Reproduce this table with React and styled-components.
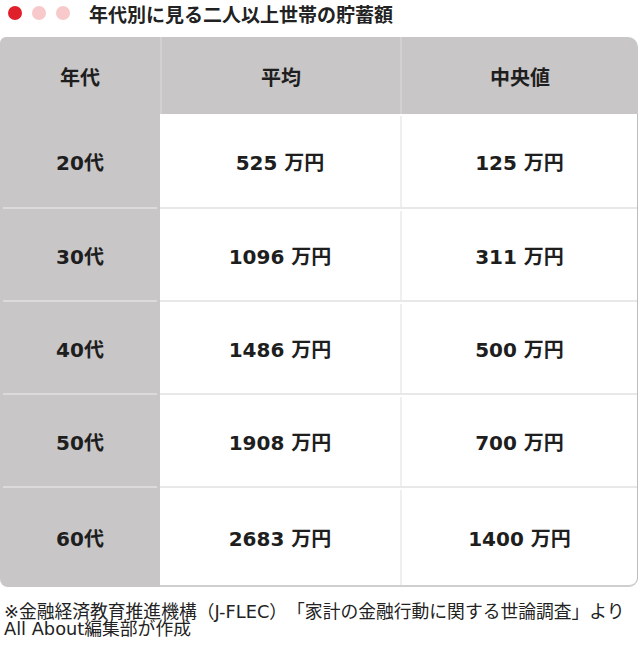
import styled, { createGlobalStyle } from "styled-components";

const rows = [
  { age: "20代", avg: "525", mid: "125" },
  { age: "30代", avg: "1096", mid: "311" },
  { age: "40代", avg: "1486", mid: "500" },
  { age: "50代", avg: "1908", mid: "700" },
  { age: "60代", avg: "2683", mid: "1400" },
];

const GlobalStyle = createGlobalStyle`
  body {
    margin: 0;
    background: #fff;
    font-family: "DejaVu Sans", "Noto Sans CJK JP", sans-serif;
    color: #1e1e1e;
  }
`;

const Page = styled.div`
  width: 640px;
  height: 660px;
  overflow: hidden;
`;

const TitleBar = styled.div`
  display: flex;
  align-items: center;
  height: 26px;
  padding-left: 8px;
  gap: 10px;
`;

const Dot = styled.span`
  width: 14px;
  height: 14px;
  border-radius: 50%;
  background: ${p => p.color};
`;

const Title = styled.h1`
  margin: 0 0 0 9px;
  font-size: 19px;
  font-weight: 700;
  color: #222;
`;

const Table = styled.div`
  margin-top: 11px;
  width: 638px;
`;

const HeaderRow = styled.div`
  display: grid;
  grid-template-columns: 160px 240px 1fr;
  height: 77px;
  background: #c8c6c6;
  border-radius: 6px 10px 0 0;
`;

const HeadCell = styled.div`
  display: flex;
  align-items: center;
  justify-content: center;
  padding-top: 2px;
  font-size: 20px;
  font-weight: 700;
  border-left: ${p => (p.$first ? "none" : "2px solid #d2d0d0")};
`;

const Body = styled.div`
  display: grid;
  grid-template-columns: 160px 1fr;
`;

const AgeCol = styled.div`
  background: #c8c6c6;
  border-bottom-left-radius: 8px;
  display: flex;
  flex-direction: column;
`;

const AgeCell = styled.div`
  height: ${p => p.$h}px;
  display: flex;
  align-items: center;
  justify-content: center;
  padding-top: 2px;
  font-size: 20px;
  font-weight: 700;
  box-sizing: border-box;
  border-top: ${p => (p.$first ? "none" : "2px solid #dcdada")};
  margin: 0 3px;
`;

const ValuePanel = styled.div`
  background: #fff;
  border-right: 1px solid #bdbdbd;
  border-bottom: 2px solid #cfcfcf;
  border-bottom-right-radius: 9px;
  border-top-left-radius: 4px;
  display: flex;
  flex-direction: column;
`;

const ValueRow = styled.div`
  height: ${p => p.$h}px;
  display: grid;
  grid-template-columns: 240px 1fr;
  box-sizing: border-box;
  padding-top: 2px;
  border-top: ${p => (p.$first ? "none" : "2px solid #e8e8e8")};
`;

const ValueCell = styled.div`
  display: flex;
  align-items: center;
  justify-content: center;
  font-size: 20px;
  font-weight: 700;
  border-left: ${p => (p.$first ? "none" : "2px solid #efefef")};
`;

const Note = styled.p`
  margin: 16px 0 0 4px;
  font-size: 17.8px;
  line-height: 17px;
  color: #222;
  text-spacing-trim: space-all;
`;

const heightOf = i => (i === rows.length - 1 ? 99 : 93);

export default function App() {
  return (
    <Page>
      <GlobalStyle />
      <TitleBar>
        <Dot color="#e0202a" />
        <Dot color="#f7c9cb" />
        <Dot color="#f7c9cb" />
        <Title>年代別に見る二人以上世帯の貯蓄額</Title>
      </TitleBar>
      <Table>
        <HeaderRow>
          <HeadCell $first>年代</HeadCell>
          <HeadCell>平均</HeadCell>
          <HeadCell>中央値</HeadCell>
        </HeaderRow>
        <Body>
          <AgeCol>
            {rows.map((r, i) => (
              <AgeCell key={r.age} $first={i === 0} $h={heightOf(i)}>
                {r.age}
              </AgeCell>
            ))}
          </AgeCol>
          <ValuePanel>
            {rows.map((r, i) => (
              <ValueRow key={r.age} $first={i === 0} $h={heightOf(i)}>
                <ValueCell $first>{r.avg} 万円</ValueCell>
                <ValueCell>{r.mid} 万円</ValueCell>
              </ValueRow>
            ))}
          </ValuePanel>
        </Body>
      </Table>
      <Note>
        ※金融経済教育推進機構（J-FLEC）「家計の金融行動に関する世論調査」より
        <br />
        All About編集部が作成
      </Note>
    </Page>
  );
}
